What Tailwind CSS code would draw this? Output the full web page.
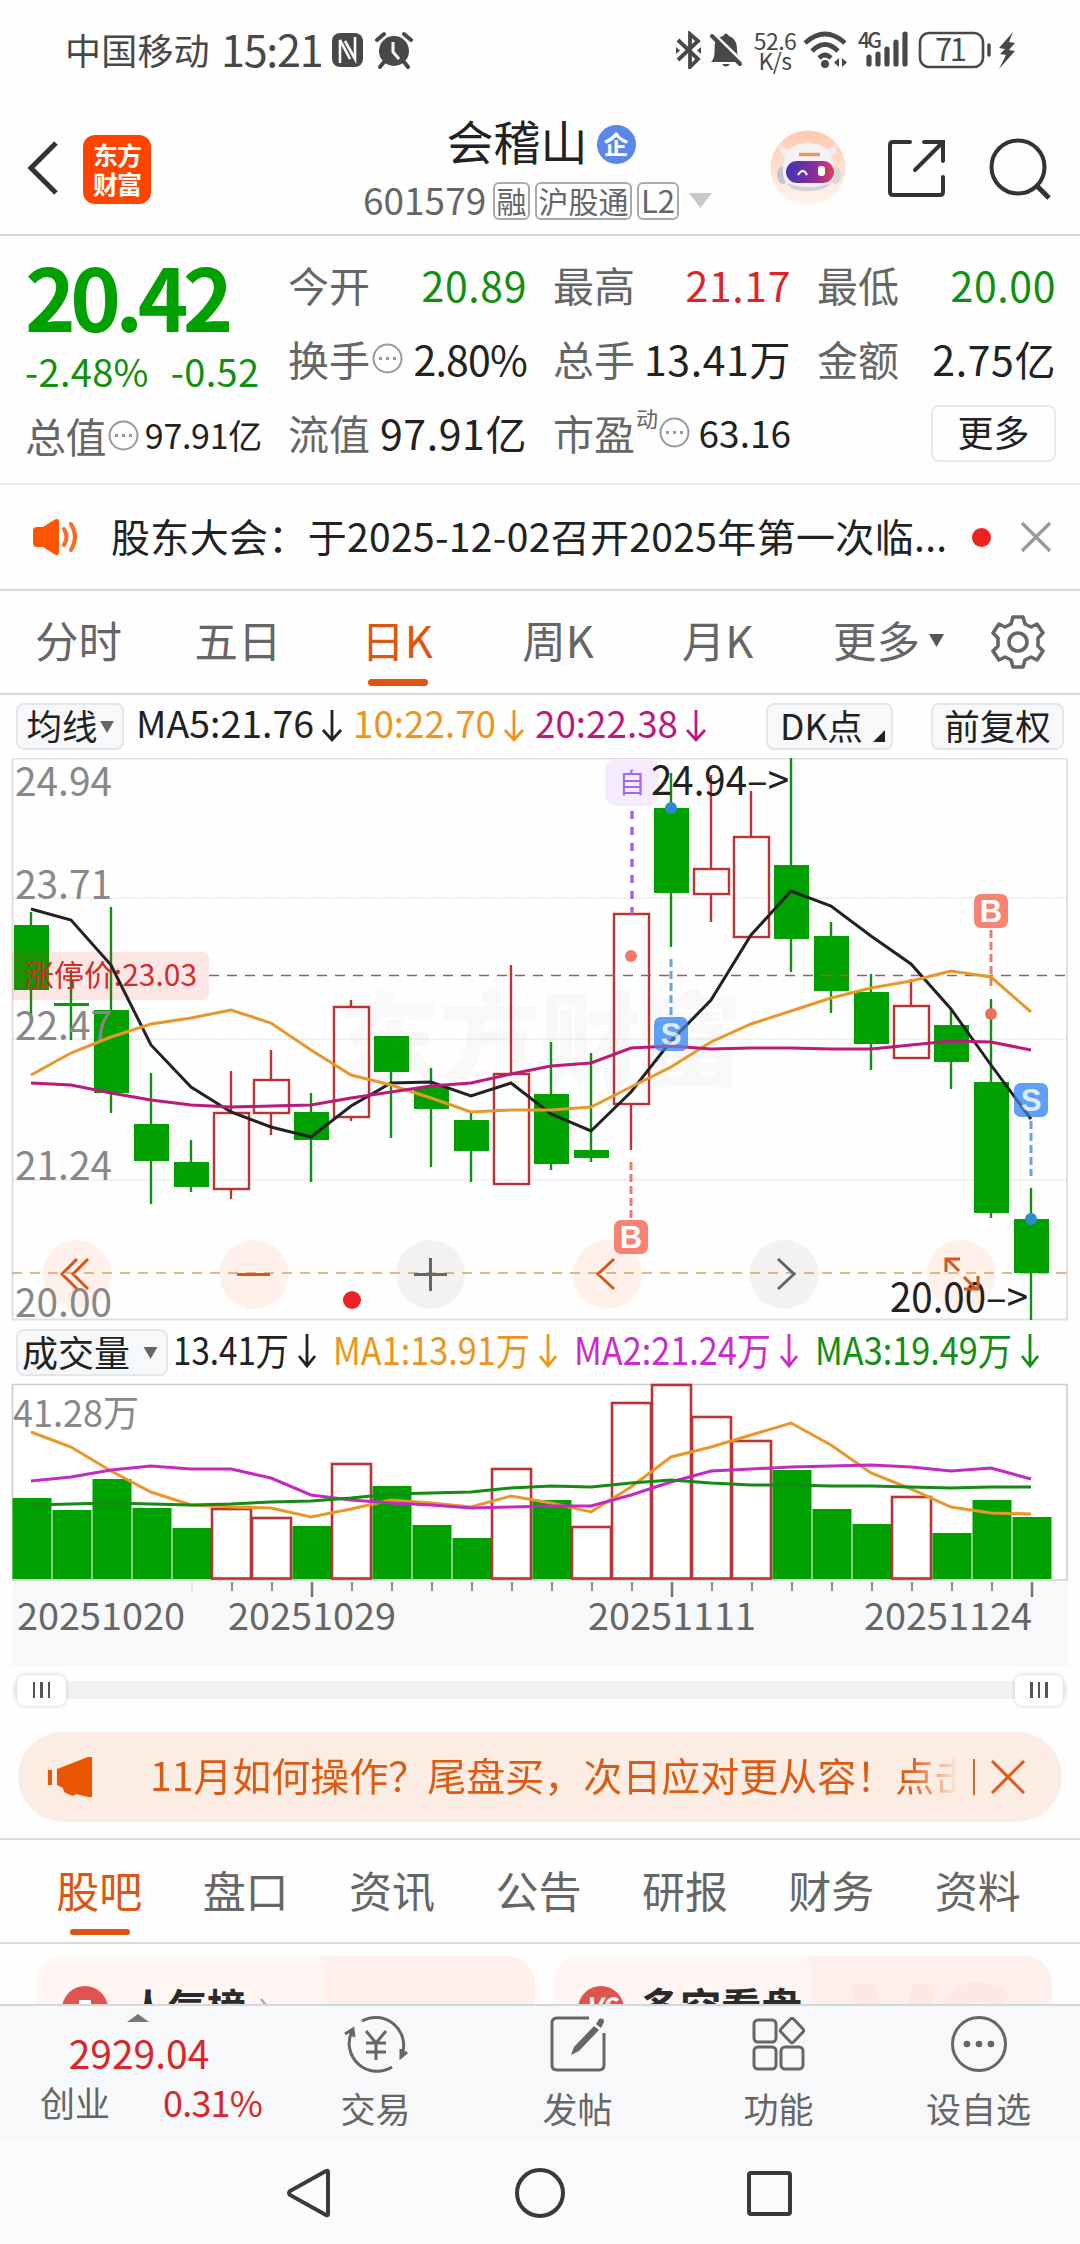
<!DOCTYPE html>
<html lang="zh-CN">

<head>
    <meta charset="UTF-8">
    <meta name="viewport" content="width=device-width, initial-scale=1.0">
    <title>会稽山 601579</title>
    <script src="https://cdn.jsdelivr.net/npm/@tailwindcss/browser@4"></script>
</head>

<body class="bg-white">
    <div class="w-[1080px] h-[2244px] overflow-hidden flex flex-col bg-[#fefefe] text-[#222] font-['Noto_Sans_CJK_SC',sans-serif] whitespace-nowrap">

        <!-- 状态栏 -->
        <div class="h-[100px] shrink-0 flex items-center pl-[65px] text-[#484848]">
            <span class="text-[36px] w-[156px] tracking-[0.2px] -mt-[3px]">中国移动</span>
            <span class="text-[43px] w-[110px] tracking-[-1.2px] leading-none -mt-1">15:21</span>
            <svg class="w-[34px] h-[36px]" viewBox="0 0 34 36"><rect x="1" y="1" width="31" height="34" rx="8" fill="#484848" /><path d="M9 31V8l10 19M24 5v22L14 9" stroke="#fff" stroke-width="2.6" fill="none" /></svg>
            <svg class="w-[40px] h-[38px] ml-2" viewBox="0 0 40 38"><circle cx="21" cy="20" r="15" fill="#484848" /><path d="M4 9l7-6M38 9l-7-6M11 31l-4 5M31 31l4 5" stroke="#484848" stroke-width="4" stroke-linecap="round" /><path d="M20 11v10l6 7" stroke="#fff" stroke-width="3" fill="none" /></svg>
            <svg class="w-[28px] h-[38px] ml-[262px]" viewBox="0 0 28 38" fill="none" stroke="#484848" stroke-width="3.8"><path d="M3 9l20 19-8 8V3l8 7L3 29" /><path d="M1 16v7l4-3.500zM26 16v7l-4-3.500z" fill="#484848" stroke="none" /></svg>
            <svg class="w-[36px] h-[38px] ml-[6px]" viewBox="0 0 36 38"><path d="M2 31C7 27 5 18 6 12C8 7 13 5 14 5q3-5 6 0c7 3 8 8 8 14c0 5 2 9 4 12z" fill="#484848" /><path d="M13 33h8q-4 5-8 0" fill="#484848" /><path d="M5 3l28 27" stroke="#fff" stroke-width="3" /><path d="M3 5l28 28" stroke="#484848" stroke-width="4" stroke-linecap="round" /></svg>
            <div class="w-[48px] ml-[6px] text-[23px] leading-[20px] text-center tracking-[-0.6px]">52.6<br>K/s</div>
            <svg class="w-[48px] h-[38px] ml-[4px]" viewBox="0 0 48 38" fill="none" stroke="#484848" stroke-width="4.6"><path d="M2 12q20-18 40 0M9 20q13-13 26 0M16 27q6-6 12 0" /><circle cx="22" cy="33" r="4" fill="#484848" stroke="none" /><path d="M36 27l-5 4.500 5 4.500zM39 27v9l5-4.500z" fill="#484848" stroke="none" /></svg>
            <svg class="w-[56px] h-[42px] ml-[6px]" viewBox="0 0 56 42"><text x="1" y="19" font-size="21" font-weight="500" fill="#484848" textLength="24">4G</text><path d="M12 28v7M21 25v10M30 20v15M39 13v22M48 5v30" stroke="#484848" stroke-width="5.2" stroke-linecap="round" /></svg>
            <svg class="w-[104px] h-[42px] ml-[4px]" viewBox="0 0 104 42"><rect x="3" y="4" width="63" height="34" rx="9" fill="none" stroke="#484848" stroke-width="2.6" /><path d="M72 16v10" stroke="#484848" stroke-width="3.500" stroke-linecap="round" /><text x="18" y="32" font-size="31" fill="#484848" textLength="32">71</text><path d="M96 3L82 19l6 1-5 5 6 1-7 14 16-18-6-1 6-7-6-1z" fill="#484848" /></svg>
        </div>

        <!-- 顶部标题 -->
        <div class="h-[136px] shrink-0 flex items-center border-b-2 border-[#d8d8d8]">
            <svg class="w-[34px] h-[60px] ml-[26px]" viewBox="0 0 34 60"><path d="M30 6L5 31l25 25" fill="none" stroke="#333" stroke-width="5" /></svg>
            <div class="w-[68px] h-[69px] ml-[23px] mt-[4px] rounded-xl bg-[#ff4400] text-white text-[25px] leading-[29px] font-bold flex items-center justify-center tracking-[-1px]">东方<br>财富</div>
            <div class="w-[386px] ml-[194px] flex flex-col items-center -mt-[2px]">
                <div class="flex items-center gap-[9px] h-[64px] pl-[6px]">
                    <span class="text-[47px] leading-none -mt-[8px]">会稽山</span>
                    <span class="w-[39px] h-[39px] rounded-full bg-[#5b88e8] text-white text-[25px] leading-[36px] text-center font-bold mt-[3px]">企</span>
                </div>
                <div class="flex items-center h-[40px] mt-[6px] text-[#666] self-start pl-[18px]">
                    <span class="text-[37px] leading-none w-[130px] -mt-[3px]">601579</span>
                    <span class="w-[37px] h-[38px] border-2 border-[#aaa] rounded-md text-[30px] leading-[32px] text-center">融</span>
                    <span class="w-[97px] h-[38px] border-2 border-[#aaa] rounded-md text-[30px] leading-[32px] text-center ml-[5px]">沪股通</span>
                    <span class="w-[42px] h-[38px] border-2 border-[#aaa] rounded-md text-[31px] leading-[32px] text-center ml-[5px]">L2</span>
                    <svg class="w-[23px] h-[16px] ml-[10px]" viewBox="0 0 23 16"><path d="M0 0h23L11.500 15z" fill="#c8c8c8" /></svg>
                </div>
            </div>
            <svg class="w-[76px] h-[76px] ml-[39px] mt-[1px]" viewBox="0 0 76 76">
                <defs>
                    <linearGradient id="halo" x1="0" y1="0" x2="0" y2="1"><stop offset="0" stop-color="#ffc9ae" /><stop offset="1" stop-color="#fff6f1" /></linearGradient>
                    <linearGradient id="visor" x1="0" y1="0" x2="1" y2="0"><stop offset="0" stop-color="#4335b8" /><stop offset=".6" stop-color="#8a2c9c" /><stop offset="1" stop-color="#e0405c" /></linearGradient>
                </defs>
                <circle cx="38" cy="38" r="37.500" fill="url(#halo)" />
                <path d="M10 14q6 8 14 4l-7 10q-9-4-7-14zM66 14q-6 8-14 4l7 10q9-4 7-14z" fill="#f0ecf1" />
                <ellipse cx="13" cy="45" rx="6" ry="9" fill="#c6c3cf" /><ellipse cx="65" cy="45" rx="6" ry="9" fill="#dcd6dd" />
                <path d="M13 42C13 22 22 13 38 13s26 9 26 29c0 12-10 19-26 19s-25-7-25-19z" fill="#f5f2f6" />
                <path d="M17 53q21 8 44 0q-6 8-23 8t-21-8" fill="#d5cfdb" />
                <path d="M29 24.500h21" stroke="#dc9c62" stroke-width="3.500" />
                <rect x="16" y="31" width="48" height="22" rx="11" fill="url(#visor)" />
                <path d="M28 45q5-8 9 0" fill="none" stroke="#fff" stroke-width="2.200" /><rect x="48" y="36" width="7" height="10" rx="3" fill="#fff" />
            </svg>
            <svg class="w-[62px] h-[62px] ml-[40px] mt-[2px]" viewBox="0 0 62 62" fill="none" stroke="#333" stroke-width="4" stroke-linecap="round"><path d="M24 5H7q-3 0-3 3v47q0 3 3 3h47q3 0 3-3V40M38 5h19v19M57 5L29 33" /></svg>
            <svg class="w-[64px] h-[64px] ml-[41px] mt-[1px]" viewBox="0 0 64 64" fill="none" stroke="#333" stroke-width="4"><circle cx="29" cy="31" r="26.500" /><path d="M47 49l13 13" stroke-width="5" /></svg>
        </div>

        <!-- 行情数据 -->
        <div class="h-[249px] shrink-0 flex pl-[25px] border-b-2 border-[#ececec]">
            <div class="w-[264px]">
                <div class="h-[98px] mt-[10px] text-[86px] leading-[98px] font-bold text-[#00a000] tracking-[-5.6px]">20.42</div>
                <div class="h-[54px] leading-[54px] text-[38px] text-[#118f11] flex gap-[22px] tracking-[0.3px]"><span>-2.48%</span><span>-0.52</span></div>
                <div class="h-[74px] flex items-center">
                    <span class="text-[41px] leading-none text-[#666] mr-[2px] tracking-[-0.6px]">总值</span>
                    <svg class="w-[31px] h-[31px] mr-[6px]" viewBox="0 0 31 31"><circle cx="15.500" cy="15.500" r="14" fill="none" stroke="#999" stroke-width="2" /><path d="M7 14h3v3h-3zM14 14h3v3h-3zM21 14h3v3h-3z" fill="#999" /></svg>
                    <span class="text-[34px] leading-none tracking-[-0.3px]">97.91亿</span>
                </div>
            </div>
            <div class="grid grid-cols-[239px_238px_239px] gap-x-[26px] grid-rows-[74px_74px_74px] pt-[11px] -ml-px items-center text-[41px] leading-none [&_b]:font-normal [&_b]:text-[#666]">
                <div class="flex justify-between"><b>今开</b><span class="text-[#118f11] tracking-[0.6px]">20.89</span></div>
                <div class="flex justify-between"><b>最高</b><span class="text-[#d62828] tracking-[0.6px]">21.17</span></div>
                <div class="flex justify-between"><b>最低</b><span class="text-[#118f11] tracking-[0.6px]">20.00</span></div>
                <div class="flex items-center"><b>换手</b><svg class="w-[31px] h-[31px] ml-[2px]" viewBox="0 0 31 31"><circle cx="15.500" cy="15.500" r="14" fill="none" stroke="#999" stroke-width="2" /><path d="M7 14h3v3h-3zM14 14h3v3h-3zM21 14h3v3h-3z" fill="#999" /></svg><span class="ml-auto tracking-[-0.8px]">2.80%</span></div>
                <div class="flex justify-between"><b>总手</b><span class="tracking-[0.6px]">13.41万</span></div>
                <div class="flex justify-between"><b>金额</b><span class="tracking-[0.6px]">2.75亿</span></div>
                <div class="flex justify-between"><b>流值</b><span class="tracking-[0.6px]">97.91亿</span></div>
                <div class="flex items-center"><b>市盈</b><b class="text-[22px] leading-none self-start -mt-[6px] ml-px">动</b><svg class="w-[31px] h-[31px] ml-px" viewBox="0 0 31 31"><circle cx="15.500" cy="15.500" r="14" fill="none" stroke="#999" stroke-width="2" /><path d="M7 14h3v3h-3zM14 14h3v3h-3zM21 14h3v3h-3z" fill="#999" /></svg><span class="text-[37px] ml-auto">63.16</span></div>
                <div class="w-[125px] h-[57px] mt-[3px] justify-self-end border-2 border-[#e6e8eb] rounded-lg text-[36px] leading-[49px] text-center">更多</div>
            </div>
        </div>

        <!-- 公告 -->
        <div class="h-[106px] shrink-0 flex items-center pl-[32px] border-b-2 border-[#d8d8d8]">
            <svg class="w-[48px] h-[40px]" viewBox="0 0 48 40"><path d="M1 14q0-4 4-4h6L22 3q5-3 5 2v30q0 5-5 2l-11-7H5q-4 0-4-4z" fill="#ff5500" /><path d="M32 12q5 8 0 16M39 7q8 13 0 26" fill="none" stroke="#ff6a1f" stroke-width="4" stroke-linecap="round" /></svg>
            <span class="text-[39px] leading-none ml-[31px] w-[850px] -mt-[4px] tracking-[0.34px]">股东大会：于2025-12-02召开2025年第一次临...</span>
            <span class="w-[19px] h-[19px] rounded-full bg-[#ee2222] ml-[11px]"></span>
            <svg class="w-[32px] h-[32px] ml-[29px]" viewBox="0 0 32 32"><path d="M2 2l28 28M30 2L2 30" stroke="#999" stroke-width="3.400" /></svg>
        </div>

        <!-- 周期切换 -->
        <div class="h-[104px] shrink-0 grid grid-cols-[157px_160px_165px_157px_161px_180px_100px] items-center text-center text-[43.500px] leading-none text-[#666] border-b-2 border-[#d8d8d8]">
            <span class="-mt-1">分时</span>
            <span class="-mt-1 pl-[2px]">五日</span>
            <span class="-mt-1 pr-[5px] text-[#dd5510] relative">日K<i class="absolute left-[51px] top-[61px] w-[60px] h-[7px] rounded-full bg-[#dd5510]"></i></span>
            <span class="-mt-1 pr-[5px]">周K</span>
            <span class="-mt-1 pr-[4px]">月K</span>
            <span class="-mt-1 flex items-center justify-center gap-[9px] pr-[3px]">更多<svg class="w-[15px] h-[13px]" viewBox="0 0 15 13"><path d="M0 0h15L7.500 13z" fill="#555" /></svg></span>
            <svg class="w-[54px] h-[56px] ml-[11px]" viewBox="0 0 54 56" fill="none" stroke="#666" stroke-width="3.600" stroke-linejoin="round"><path d="M22 3h10l2 7 6 3 6-3 6 9-5 5v8l5 5-6 9-6-3-6 3-2 7H22l-2-7-6-3-6 3-6-9 5-5v-8l-5-5 6-9 6 3 6-3z" /><circle cx="27" cy="28" r="9" /></svg>
        </div>

        <!-- 均线 -->
        <div class="h-[63px] shrink-0 flex items-center pl-[16px] pb-[1px] text-[35.500px] leading-none">
            <div class="w-[108px] h-[47px] border-2 border-[#e3e6ea] bg-[#f7f8fa] rounded-lg flex items-center justify-center gap-[2px] pb-[3px]">均线<svg class="w-[14px] h-[12px] mt-1" viewBox="0 0 15 13"><path d="M0 0h15L7.500 13z" fill="#666" /></svg></div>
            <svg class="w-[640px] h-[62px] -mr-[-2px]" viewBox="124 695 640 62" font-size="37">
                <text x="136" y="738" fill="#222" textLength="178" lengthAdjust="spacingAndGlyphs">MA5:21.76</text>
                <text x="353" y="738" fill="#ec971c" textLength="143" lengthAdjust="spacingAndGlyphs">10:22.70</text>
                <text x="535" y="738" fill="#bb1a7c" textLength="143" lengthAdjust="spacingAndGlyphs">20:22.38</text>
                <g fill="none" stroke-width="2.800">
                    <path d="M332 710v30M323 730l9 10 9-10" stroke="#222" />
                    <path d="M514 710v30M505 730l9 10 9-10" stroke="#ec971c" />
                    <path d="M696 710v30M687 730l9 10 9-10" stroke="#bb1a7c" />
                </g>
            </svg>
            <div class="w-[127px] h-[47px] border-2 border-[#e3e6ea] bg-[#f7f8fa] rounded-lg flex items-center pl-[12px] pb-[3px]">DK点<svg class="w-[12px] h-[12px] ml-[10px] mt-[22px]" viewBox="0 0 12 12"><path d="M12 0v12H0z" fill="#222" /></svg></div>
            <div class="w-[133px] h-[47px] ml-[38px] border-2 border-[#e3e6ea] bg-[#f7f8fa] rounded-lg flex items-center justify-center pb-[3px]">前复权</div>
        </div>

        <!-- K线图 -->
        <svg id="kline" class="w-[1080px] h-[564px] shrink-0" viewBox="0 758 1080 564"></svg>

        <!-- 成交量 -->
        <div class="h-[61px] shrink-0 flex items-center pl-[16px] text-[36px] leading-none">
            <div class="w-[152px] h-[47px] border-2 border-[#e3e6ea] bg-[#f7f8fa] rounded-lg flex items-center justify-center gap-[13px] pr-[4px] pb-[3px]">成交量<svg class="w-[15px] h-[12px] mt-1" viewBox="0 0 15 13"><path d="M0 0h15L7.500 13z" fill="#666" /></svg></div>
            <svg class="w-[900px] h-[61px]" viewBox="168 1322 900 61" font-size="38">
                <text x="173" y="1365" fill="#222" textLength="116" lengthAdjust="spacingAndGlyphs">13.41万</text>
                <text x="333" y="1365" fill="#ec971c" textLength="197" lengthAdjust="spacingAndGlyphs">MA1:13.91万</text>
                <text x="574" y="1365" fill="#cc2acc" textLength="197" lengthAdjust="spacingAndGlyphs">MA2:21.24万</text>
                <text x="815" y="1365" fill="#118f11" textLength="197" lengthAdjust="spacingAndGlyphs">MA3:19.49万</text>
                <g fill="none" stroke-width="2.800">
                    <path d="M307 1334v32M299 1356l8 10 8-10" stroke="#222" />
                    <path d="M548 1334v32M540 1356l8 10 8-10" stroke="#ec971c" />
                    <path d="M789 1334v32M781 1356l8 10 8-10" stroke="#cc2acc" />
                    <path d="M1030 1334v32M1022 1356l8 10 8-10" stroke="#118f11" />
                </g>
            </svg>
        </div>
        <svg id="volume" class="w-[1080px] h-[283px] shrink-0" viewBox="0 1383 1080 283"></svg>

        <!-- 区间滑块 -->
        <div class="h-[48px] shrink-0 px-[12px] pt-[15px]">
            <div class="h-[18px] rounded-full bg-[#f0f1f3] flex items-center justify-between px-[5px]">
                <div class="w-[49px] h-[31px] rounded-lg bg-white shadow-[0_0_4px_#ccc] flex items-center justify-center gap-[5px]"><i class="w-[2.500px] h-[16px] bg-[#555]"></i><i class="w-[2.500px] h-[16px] bg-[#555]"></i><i class="w-[2.500px] h-[16px] bg-[#555]"></i></div>
                <div class="w-[48px] h-[31px] rounded-lg bg-white shadow-[0_0_4px_#ccc] flex items-center justify-center gap-[5px]"><i class="w-[2.500px] h-[16px] bg-[#555]"></i><i class="w-[2.500px] h-[16px] bg-[#555]"></i><i class="w-[2.500px] h-[16px] bg-[#555]"></i></div>
            </div>
        </div>

        <!-- 广告条 -->
        <div class="h-[126px] shrink-0 px-[18px] pt-[18px] border-b-2 border-[#d8d8d8]">
            <div class="h-[90px] rounded-full bg-[#fcede4] flex items-center pl-[29px]">
                <svg class="w-[48px] h-[42px]" viewBox="0 0 48 42"><path d="M1 14h4v15H1zM10 13L41 1h4v40h-4l-12-3q-2 3-6 1l-6-3-1-4-6-3z" fill="#ea5504" /></svg>
                <span class="w-[808px] ml-[55px] overflow-hidden text-[39px] leading-[56px] -mt-[6px] text-[#dd5a12] mask-r-from-94% mask-r-to-100% tracking-[0px]">11月如何操作？尾盘买，次日应对更从容！点击</span>
                <span class="w-[2px] h-[36px] bg-[#d8692c] ml-[15px]"></span>
                <svg class="w-[34px] h-[34px] ml-[16px]" viewBox="0 0 34 34"><path d="M1 1l32 32M33 1L1 33" stroke="#e0591a" stroke-width="3" /></svg>
            </div>
        </div>

        <!-- 栏目 -->
        <div class="h-[104px] shrink-0 grid grid-cols-7 pl-[26px] pr-[29px] items-center text-center text-[43px] leading-none text-[#666] border-b-2 border-[#d8d8d8]">
            <span class="-mt-1 text-[#dd5510] relative">股吧<i class="absolute left-[44px] top-[61px] w-[60px] h-[6px] rounded-full bg-[#dd5510]"></i></span>
            <span class="-mt-1">盘口</span>
            <span class="-mt-1">资讯</span>
            <span class="-mt-1">公告</span>
            <span class="-mt-1">研报</span>
            <span class="-mt-1">财务</span>
            <span class="-mt-1">资料</span>
        </div>

        <div class="h-[60px] shrink-0 overflow-hidden flex gap-[18px] px-[36px] pt-[12px]">
            <div class="w-[499px] h-[120px] shrink-0 rounded-[28px] bg-linear-to-r from-[#fff6f3] from-57% to-[#fff0ed] to-58% flex items-start pl-[26px] pt-[30px] text-[39px] font-bold leading-none text-[#2a2a2a]">
                <svg class="w-[46px] h-[46px]" viewBox="0 0 46 46"><circle cx="23" cy="23" r="23" fill="#de5550" /><path d="M17 14h12v22H17z" fill="#fff" /></svg>
                <span class="ml-[21px] -ml-px">人气榜</span>
                <svg class="w-[12px] h-[24px] ml-[14px] mt-[12px]" viewBox="0 0 12 24"><path d="M1 1l9 11-9 11" fill="none" stroke="#aaa" stroke-width="2.500" /></svg>
            </div>
            <div class="w-[499px] h-[120px] shrink-0 rounded-[28px] bg-linear-to-r from-[#fff6f3] from-51% to-[#fff0ed] to-52% flex items-start pl-[25px] pt-[30px] text-[40.500px] font-bold leading-none text-[#2a2a2a]">
                <svg class="w-[46px] h-[46px]" viewBox="0 0 46 46"><circle cx="23" cy="23" r="23" fill="#de5550" /><text x="23" y="30" font-size="25" font-style="italic" fill="#fff" text-anchor="middle">VS</text></svg>
                <span class="ml-[16px]">多空看盘</span>
                <span class="ml-[50px] text-[130px] leading-[76px] font-black text-[#fde8e5]">VS</span>
            </div>
        </div>

        <!-- 底部菜单 -->
        <div class="h-[137px] shrink-0 flex bg-[#f7f8fa] border-t-2 border-[#d5d7da] text-[35px] leading-none text-[#666]">
            <div class="w-[276px] flex flex-col items-center text-[#d62828]">
                <svg class="w-[22px] h-[8px] mt-[8px]" viewBox="0 0 22 8"><path d="M11 0l11 8H0z" fill="#777" /></svg>
                <span class="text-[39px] leading-[46px] mt-[7px] ml-[2px]">2929.04</span>
                <span class="flex items-center w-full pl-[40px] mt-[3px] gap-[53px] h-[46px]"><span class="text-[#666]">创业</span><span class="text-[36px] tracking-[-0.8px]">0.31%</span></span>
            </div>
            <div class="w-[201px] flex flex-col items-center pt-[8px] gap-[16px] pr-[2px]">
                <svg class="w-[68px] h-[60px]" viewBox="0 0 68 60" fill="none" stroke="#666" stroke-width="3"><path d="M20 7A28 28 0 0 1 60 41M50 53A28 28 0 0 1 10 17M3 20l8-5 1 8M65 38l-6 5v-8" /><path d="M24 17l10 12 10-12M34 29v17M24 29h20M24 38h20" /></svg>
                <span>交易</span>
            </div>
            <div class="w-[201px] flex flex-col items-center pt-[8px] gap-[16px]">
                <svg class="w-[60px] h-[60px]" viewBox="0 0 60 60" fill="none" stroke="#666" stroke-width="3"><path d="M41 4H9q-5 0-5 5v42q0 5 5 5h42q5 0 5-5V19" /><path d="M51 5q5-2 5 3l-3 6-5-4zM46 12l5 4-20 21-8 4 3-8z" fill="#666" stroke="none" /></svg>
                <span>发帖</span>
            </div>
            <div class="w-[201px] flex flex-col items-center pt-[8px] gap-[16px]">
                <svg class="w-[60px] h-[60px]" viewBox="0 0 60 60" fill="none" stroke="#666" stroke-width="3"><rect x="5" y="6" width="22" height="22" rx="4" /><rect x="5" y="33" width="22" height="22" rx="4" /><rect x="32" y="33" width="22" height="22" rx="4" /><path d="M41.500 5q1.500-1.500 3 0l9.500 10q1.500 1.500 0 3l-9.500 10q-1.500 1.500-3 0l-9.500-10q-1.500-1.500 0-3z" /></svg>
                <span>功能</span>
            </div>
            <div class="w-[201px] flex flex-col items-center pt-[8px] gap-[16px] pr-[2px]">
                <svg class="w-[60px] h-[60px]" viewBox="0 0 60 60"><circle cx="30" cy="30" r="26.500" fill="none" stroke="#666" stroke-width="3" /><g fill="#666"><circle cx="18" cy="30" r="3.300" /><circle cx="30" cy="30" r="3.300" /><circle cx="42" cy="30" r="3.300" /></g></svg>
                <span>设自选</span>
            </div>
        </div>

        <!-- 系统导航 -->
        <div class="h-[104px] shrink-0 bg-[#fcfcfc] flex items-center pl-[286px]">
            <svg class="w-[46px] h-[52px]" viewBox="0 0 46 52"><path d="M42 5v42q0 2-2 1L4 28q-2-2 0-4L40 4q2-1 2 1z" fill="none" stroke="#3a3a3a" stroke-width="4" /></svg>
            <svg class="w-[52px] h-[52px] ml-[182px]" viewBox="0 0 52 52"><circle cx="26" cy="26" r="23" fill="none" stroke="#3a3a3a" stroke-width="4" /></svg>
            <svg class="w-[48px] h-[48px] ml-[179px]" viewBox="0 0 48 48"><rect x="4" y="4" width="41" height="41" rx="2" fill="none" stroke="#3a3a3a" stroke-width="4" /></svg>
        </div>
    </div>

    <script>
        // [涨跌, 最高, 实体顶, 实体底, 最低, 成交量顶, 量柱颜色]
        const bars = [
            ['g', 912, 925, 990, 1019, 1498], ['g', 970, 1003, 1006, 1040, 1510], ['g', 907, 1010, 1093, 1113, 1479],
            ['g', 1073, 1124, 1161, 1204, 1508], ['g', 1140, 1162, 1187, 1192, 1528], ['r', 1071, 1113, 1189, 1199, 1509],
            ['r', 1050, 1080, 1113, 1135, 1518], ['g', 1093, 1112, 1140, 1182, 1526], ['r', 1000, 1007, 1117, 1121, 1464],
            ['g', 1036, 1036, 1072, 1138, 1486], ['g', 1068, 1087, 1109, 1167, 1525], ['g', 1112, 1120, 1151, 1182, 1538],
            ['r', 965, 1074, 1184, 1184, 1469], ['g', 1042, 1094, 1164, 1170, 1500], ['g', 1053, 1150, 1158, 1162, 1527, 'r'],
            ['r', 914, 914, 1104, 1150, 1403], ['g', 773, 808, 893, 947, 1385, 'r'], ['r', 775, 869, 894, 922, 1417],
            ['r', 791, 837, 937, 937, 1441], ['g', 758, 865, 939, 972, 1470], ['g', 922, 936, 991, 1013, 1509],
            ['g', 974, 992, 1044, 1070, 1524], ['r', 979, 1006, 1058, 1058, 1497], ['g', 1009, 1025, 1062, 1089, 1533],
            ['g', 999, 1082, 1213, 1218, 1500], ['g', 1188, 1219, 1273, 1320, 1517]
        ];
        const ma5 = [909, 920, 965, 1045, 1087, 1112, 1127, 1137, 1106, 1083, 1082, 1096, 1083, 1114, 1131, 1092, 1041, 1000, 935, 891, 906, 936, 964, 1009, 1065, 1119];
        const ma10 = [1075, 1053, 1037, 1024, 1018, 1010, 1023, 1050, 1075, 1085, 1098, 1112, 1110, 1110, 1107, 1087, 1067, 1042, 1024, 1011, 998, 988, 981, 971, 977, 1012];
        const ma20 = [1083, 1085, 1093, 1100, 1105, 1107, 1106, 1105, 1098, 1092, 1086, 1083, 1074, 1066, 1063, 1048, 1046, 1049, 1048, 1048, 1049, 1049, 1045, 1041, 1042, 1050];
        const v1 = [1432, 1447, 1471, 1492, 1505, 1507, 1508, 1517, 1509, 1500, 1503, 1507, 1496, 1503, 1512, 1487, 1457, 1447, 1435, 1423, 1445, 1473, 1489, 1507, 1513, 1514];
        const v2 = [1481, 1477, 1470, 1466, 1469, 1469, 1478, 1495, 1500, 1503, 1505, 1508, 1507, 1506, 1506, 1495, 1482, 1471, 1469, 1467, 1466, 1465, 1467, 1471, 1468, 1479];
        const v3 = [1505, 1504, 1503, 1504, 1505, 1504, 1502, 1501, 1498, 1494, 1493, 1492, 1488, 1486, 1487, 1483, 1480, 1483, 1485, 1485, 1486, 1486, 1487, 1488, 1487, 1487];

        const GREEN = '#00a000', RED = '#bb3333';
        const cx = i => 31 + i * 40;
        const line = (x1, y1, x2, y2, color, extra = '') => `<path d="M${x1} ${y1}L${x2} ${y2}" stroke="${color}" ${extra}/>`;
        const poly = (ys, color) => `<polyline points="${ys.map((y, i) => cx(i) + ',' + y).join(' ')}" fill="none" stroke="${color}" stroke-width="3"/>`;
        const text = (x, y, s, size, color, w) => `<text x="${x}" y="${y}" font-size="${size}" fill="${color}" textLength="${w}" lengthAdjust="spacingAndGlyphs">${s}</text>`;
        const badge = (x, y, s, color) => `<rect x="${x - 17}" y="${y - 17}" width="34" height="34" rx="7" fill="${color}" fill-opacity=".93"/><text x="${x}" y="${y + 11}" font-size="31" font-weight="700" font-family="Liberation Sans" fill="#fff" text-anchor="middle">${s}</text>`;
        const dot = (x, y, color, r = 6) => `<circle cx="${x}" cy="${y}" r="${r}" fill="${color}"/>`;

        let k = '<text x="338" y="1078" font-size="102" font-weight="900" fill="#000" fill-opacity=".025" textLength="405">东方财富</text>';
        k += '<rect x="12.5" y="758.5" width="1054.500" height="561" fill="none" stroke="#e0e0e0" stroke-width="2"/>';
        [898, 1039, 1180].forEach(y => k += line(12, y, 1067, y, '#ccc', 'stroke-dasharray="1.5 1.5"'));
        // 操作按钮底色
        ['#fff1e9', '#fff1e9', '#f2f2f2', '#fff1e9', '#f2f2f2', '#fff1e9'].forEach((c, i) => k += dot(77 + i * 176.8, 1274.5, c, 34.5));
        k += line(12, 1273, 1067, 1273, '#dbb892', 'stroke-width="2" stroke-dasharray="10 8"');
        bars.forEach(([c, hi, top, bot, lo], i) => {
            const x = cx(i);
            if (c === 'g') {
                k += line(x, hi, x, lo, '#118f11', 'stroke-width="2.400"');
                k += `<rect x="${x - 17}" y="${top}" width="35" height="${bot - top}" fill="${GREEN}"/>`;
            } else {
                k += line(x, hi, x, top, RED, 'stroke-width="2.400"') + line(x, bot, x, lo, RED, 'stroke-width="2.400"');
                k += `<rect x="${x - 17}" y="${top}" width="35" height="${bot - top}" fill="none" stroke="${RED}" stroke-width="2.400"/>`;
            }
        });
        k += line(209, 975.5, 1067, 975.5, '#b0554f', 'stroke-width="1.5" stroke-dasharray="10 8"');
        k += '<path d="M12 952H203q6 0 6 6v36q0 6-6 6H12z" fill="#ee2222" fill-opacity=".11"/>' + text(24, 986, '涨停价:23.03', 30, '#d02c2c', 173);
        [['24.94', 796], ['23.71', 899], ['22.47', 1040], ['21.24', 1180], ['20.00', 1317]].forEach(([s, y]) => k += text(15, y, s, 39.5, '#888', 97));
        // 标注
        k += line(671, 959, 671, 1016, '#6aa2e4', 'stroke-width="3" stroke-dasharray="8 4"') + badge(671, 1034, 'S', '#5a9cf8');
        k += line(1031, 1121, 1031, 1176, '#6aa2e4', 'stroke-width="3" stroke-dasharray="8 4"') + badge(1031, 1100, 'S', '#5a9cf8');
        k += line(631, 1162, 631, 1219, '#ea7c6c', 'stroke-width="3" stroke-dasharray="8 4"') + badge(631, 1237, 'B', '#f87868');
        k += line(991, 930, 991, 987, '#ea7c6c', 'stroke-width="3" stroke-dasharray="8 4"') + badge(991, 911, 'B', '#f87868');
        k += line(632, 811, 632, 914, '#a76be8', 'stroke-width="3.500" stroke-dasharray="8 8"');
        k += '<rect x="605" y="759" width="54" height="47" rx="11" fill="#f5ebff"/><text x="632" y="793" font-size="27" fill="#a567e6" text-anchor="middle">自</text>';
        k += poly(ma5, '#222') + poly(ma10, '#e8982a') + poly(ma20, '#bb1a7c');
        // 均线从 S 标下方穿过
        k += '<g fill-opacity=".65">' + badge(671, 1034, 'S', '#5a9cf8').replace('.93', '.55') + badge(1031, 1100, 'S', '#5a9cf8').replace('.93', '.55') + '</g>';
        k += dot(671, 808, '#2f8bd0') + dot(1031, 1219, '#2f8bd0') + dot(631, 956, '#f87868') + dot(991, 1014, '#e8735c');
        k += text(651, 795, '24.94–&gt;', 40, '#222', 138) + text(890, 1312, '20.00–&gt;', 40, '#222', 138);
        k += dot(352, 1300, '#ee2222', 9);
        k += '<g fill="none" stroke="#d4581c" stroke-width="3"><path d="M77 1259l-15 15 15 15M88 1259l-15 15 15 15M237 1274.500h33M614 1259l-16 15 16 15M959 1271l-12-12M946 1272v-13h14M964 1277l12 12M978 1276v13h-14"/></g>';
        k += '<g fill="none" stroke="#666" stroke-width="3"><path d="M414 1274.500h33M430.500 1258v33M778 1259l16 15-16 15"/></g>';
        document.getElementById('kline').innerHTML = k;

        let v = '<rect x="12.5" y="1384.500" width="1054.500" height="195.500" fill="#fff" stroke="#ccc" stroke-width="1.500"/>';
        bars.forEach((b, i) => {
            const x = cx(i), y = b[5];
            v += (b[6] || b[0]) === 'g'
                ? `<rect x="${x - 18.5}" y="${y}" width="39" height="${1579 - y}" fill="${GREEN}"/>`
                : `<rect x="${x - 19}" y="${y}" width="39" height="${1578.500 - y}" fill="#fff" stroke="${RED}" stroke-width="2.600"/>`;
        });
        v += text(13, 1427, '41.28万', 37, '#888', 126);
        v += poly(v1, '#e8982a') + poly(v2, '#c22ac2') + poly(v3, '#148c14');
        v += '<rect x="12" y="1582" width="1056" height="84" fill="#f7f8fa"/>';
        for (let i = 4; i < 26; i++) {
            const major = i === 7 || i === 16 || i === 25;
            v += line(cx(i) + 1, 1582, cx(i) + 1, major ? 1597 : 1591, i === 4 ? '#ddd' : '#777', `stroke-width="${major ? 2.6 : 1.6}"`);
        }
        [[17, '20251020'], [228, '20251029'], [588, '20251111'], [864, '20251124']].forEach(([x, s]) => v += text(x, 1630, s, 37, '#666', 168));
        document.getElementById('volume').innerHTML = v;
    </script>
</body>

</html>
